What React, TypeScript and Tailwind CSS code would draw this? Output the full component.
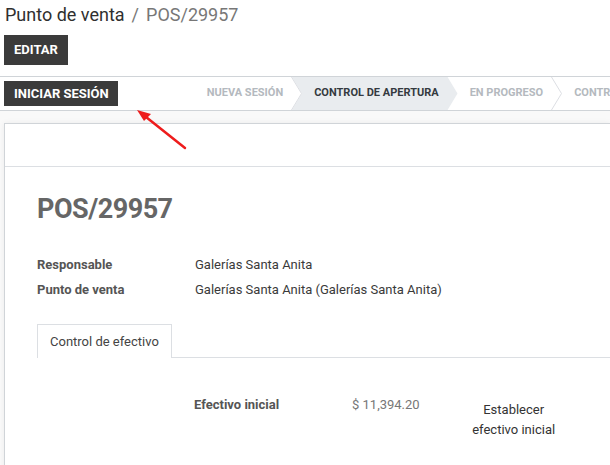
import React from "react";

type Stage = {
  label: string;
  active?: boolean;
};

const stages: Stage[] = [
  { label: "Nueva sesión" },
  { label: "Control de apertura", active: true },
  { label: "En progreso" },
  { label: "Control de cierre" },
];

const StageItem = ({ stage, last }: { stage: Stage; last: boolean }) => {
  return (
    <div className="relative flex h-full shrink-0 items-center pl-[22px] pr-[9px]">
      {stage.active && (
        <svg
          className="absolute left-0 top-0 h-full w-[calc(100%+10px)]"
          viewBox="0 0 100 33"
          preserveAspectRatio="none"
        >
          <polygon points="0,0 94,0 100,16.5 94,33 0,33 6,16.5" fill="#e9ecef" />
        </svg>
      )}
      <span
        className={
          stage.active
            ? "relative z-10 whitespace-nowrap text-[11px] font-bold uppercase text-[#343a40]"
            : "relative z-10 whitespace-nowrap text-[11px] font-bold uppercase text-[#b4b9be]"
        }
      >
        {stage.label}
      </span>
      {!stage.active && !last && (
        <svg
          className="absolute right-[-10px] top-0 z-10 h-full w-[11px]"
          viewBox="0 0 11 33"
          preserveAspectRatio="none"
        >
          <polyline points="0.5,0 10.5,16.5 0.5,33" fill="none" stroke="#dcdfe3" strokeWidth="1" />
        </svg>
      )}
    </div>
  );
};

export default function App() {
  return (
    <div className="relative flex h-[465px] w-[610px] flex-col overflow-hidden bg-white font-['Roboto',sans-serif] text-[13px] text-[#4c4c4c]">
      {/* control panel */}
      <div className="px-[5px] pt-[2px]">
        <div className="flex items-center gap-[7px] text-[18px] leading-[26px]">
          <span className="text-[#2f2f2f]">Punto de venta</span>
          <span className="text-[#777]">/</span>
          <span className="text-[#777]">POS/29957</span>
        </div>
        <div className="mt-[7px] flex">
          <button className="-ml-px h-[30px] bg-[#3b3b3b] px-[10px] text-[13px] font-bold uppercase text-white">
            Editar
          </button>
        </div>
      </div>

      {/* statusbar */}
      <div className="mt-[11px] flex h-[35px] shrink-0 items-center overflow-hidden border-y border-[#d0d4d8] pl-[4px]">
        <button className="h-[25px] shrink-0 bg-[#3b3b3b] pl-[10px] pr-[9px] text-[13px] font-bold uppercase leading-[25px] text-white">
          Iniciar sesión
        </button>
        <div className="ml-[67px] flex h-full">
          {stages.map((s, i) => (
            <StageItem key={s.label} stage={s} last={i === stages.length - 1} />
          ))}
        </div>
      </div>

      {/* form view */}
      <div className="flex-1 overflow-hidden bg-[#f9f9f9] pl-[4px] pt-[12px]">
        <div className="h-[calc(100%+20px)] border border-r-0 border-[#d0d4d8] bg-white shadow-[0_0_6px_rgba(0,0,0,0.06)]">
          <div className="h-[43px] border-b border-[#dcdfe3]" />
          <div className="pl-[32px] pt-[24px]">
            <h1 className="text-[27px] font-bold leading-[36px] tracking-[-0.5px] text-[#666]">
              POS/29957
            </h1>

            <div className="mt-[25px] flex flex-col">
              <div className="flex h-[25px] items-center">
                <span className="w-[158px] font-bold text-[#555]">Responsable</span>
                <span className="text-[#3a3a3a]">Galerías Santa Anita</span>
              </div>
              <div className="flex h-[25px] items-center">
                <span className="w-[158px] font-bold text-[#555]">Punto de venta</span>
                <span className="text-[#3a3a3a]">Galerías Santa Anita (Galerías Santa Anita)</span>
              </div>
            </div>

            <div className="mt-[22px] flex">
              <div className="flex h-[34px] items-center border border-b-0 border-[#dcdfe3] px-[12px] text-[#444]">
                Control de efectivo
              </div>
              <div className="flex-1 border-b border-[#dcdfe3]" />
            </div>

            <div className="mt-[38px] flex items-start">
              <span className="ml-[157px] w-[158px] font-bold leading-[18px] text-[#555]">Efectivo inicial</span>
              <span className="leading-[18px] text-[#777]">$ 11,394.20</span>
              <div className="ml-[44px] w-[100px] pt-[4px] text-center leading-[20px] text-[#333]">
                Establecer
                <br />
                efectivo inicial
              </div>
            </div>
          </div>
        </div>
      </div>

      {/* annotation arrow */}
      <svg className="pointer-events-none absolute left-0 top-0 h-[465px] w-[610px]" viewBox="0 0 610 465">
        <line x1="185" y1="148" x2="146" y2="117" stroke="#ee1c1c" strokeWidth="2.5" strokeLinecap="round" />
        <polygon points="137,110 151,114 144,121" fill="#ee1c1c" />
      </svg>
    </div>
  );
}
